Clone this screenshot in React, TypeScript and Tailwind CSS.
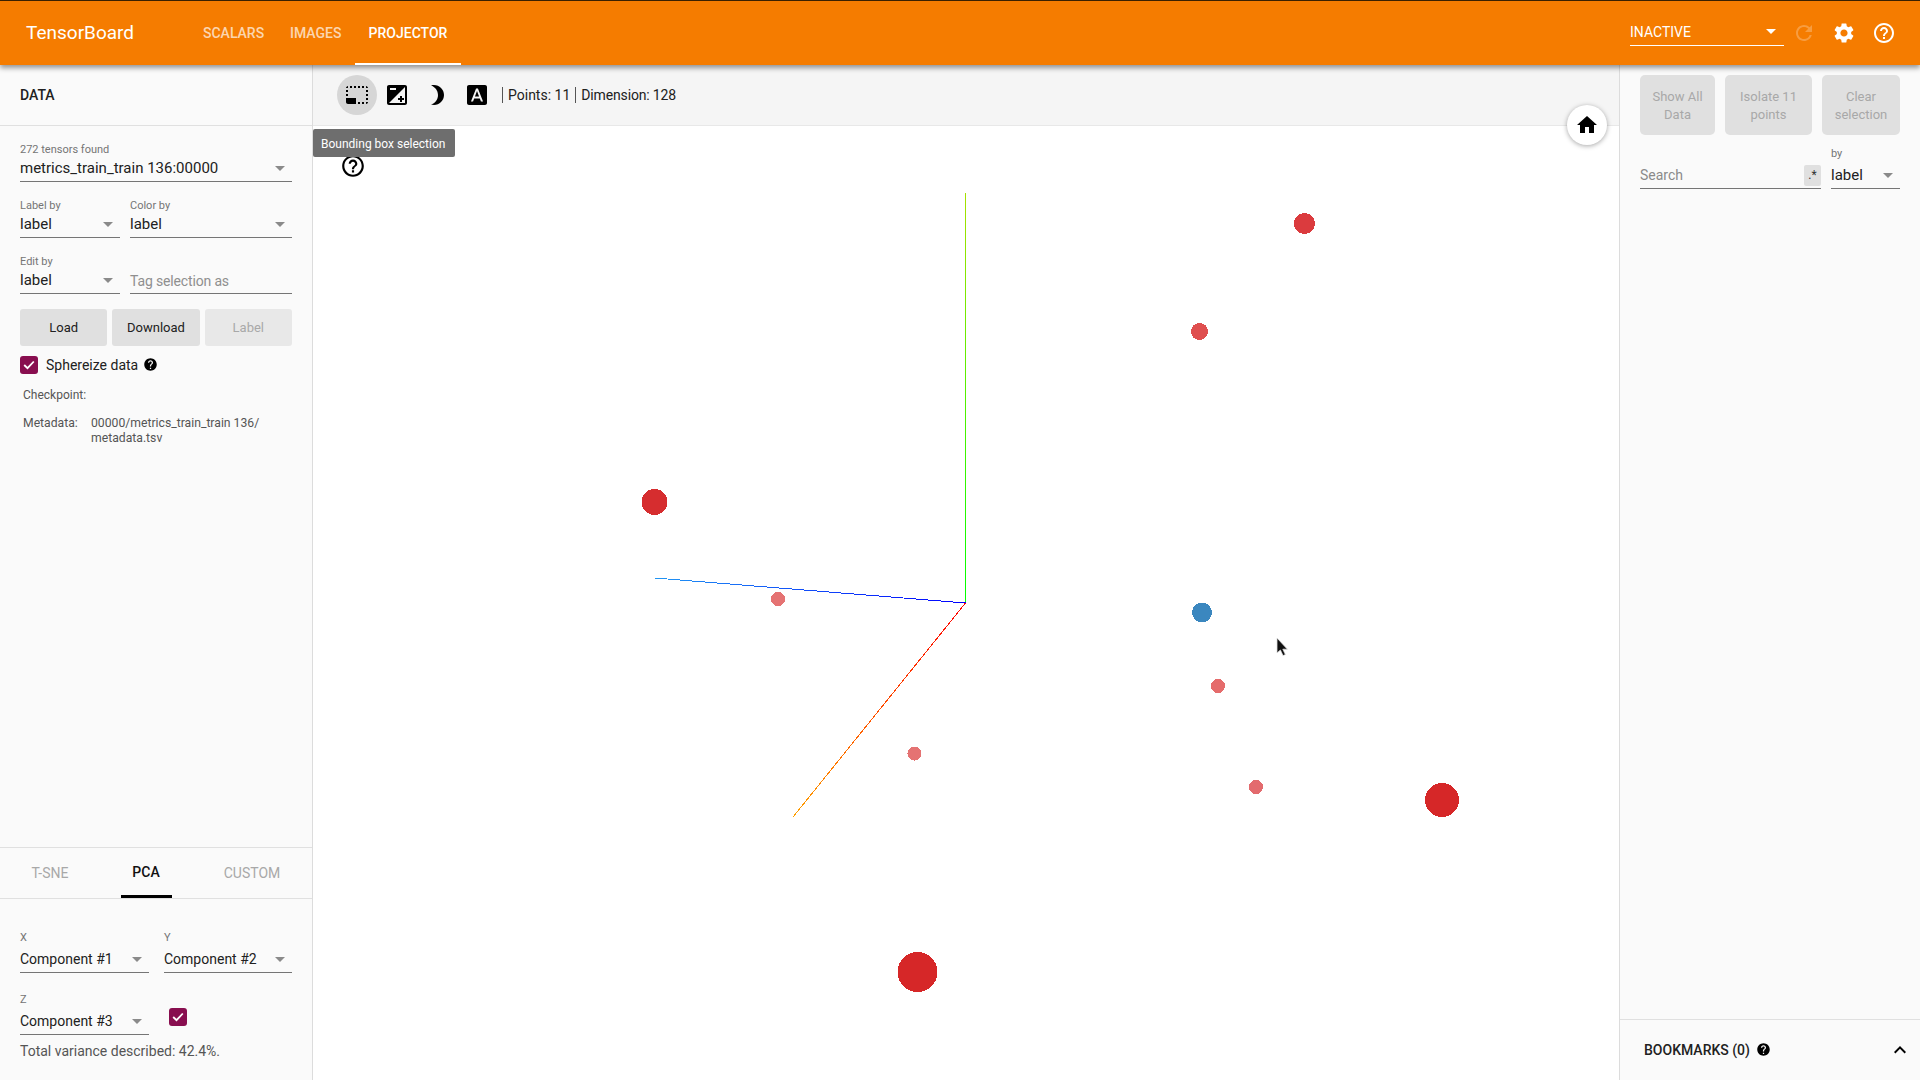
import type { ReactNode } from "react";
import {
  MdBrightness3,
  MdExpandLess,
  MdFontDownload,
  MdHelp,
  MdHelpOutline,
  MdHome,
  MdPhotoSizeSelectSmall,
  MdRefresh,
  MdSettings,
} from "react-icons/md";

const points = [
  { x: 1304.5, y: 223.5, r: 10.5, fill: "#db3b3e" },
  { x: 1199.5, y: 331.5, r: 8.5, fill: "#df4f4f" },
  { x: 654.5, y: 502, r: 13, fill: "#d62d2f" },
  { x: 778, y: 599, r: 7, fill: "#e57373" },
  { x: 1202, y: 612.5, r: 10, fill: "#3b87bf" },
  { x: 1218, y: 686, r: 7, fill: "#e56c6c" },
  { x: 914.5, y: 753.5, r: 7, fill: "#e57373" },
  { x: 1256, y: 787, r: 7, fill: "#e36b6e" },
  { x: 1442, y: 800, r: 17, fill: "#d62728" },
  { x: 917.5, y: 972, r: 20, fill: "#d62728" },
];

function Arrow({ className = "text-[#8a8a8a]" }: { className?: string }) {
  return (
    <svg width="10" height="5" viewBox="0 0 10 5" className={className}>
      <path d="M0 0h10L5 5z" fill="currentColor" />
    </svg>
  );
}

function Select({
  label,
  value,
  tall,
  className = "",
  textClassName = "text-sm",
}: {
  label: string;
  value: string;
  tall?: boolean;
  className?: string;
  textClassName?: string;
}) {
  return (
    <div className={`flex flex-col ${className}`}>
      <div
        className={`h-[13px] pt-px text-[11px] leading-3 text-[#757575] ${tall ? "mb-[2px]" : ""}`}
      >
        {label}
      </div>
      <div
        className={`flex items-center justify-between border-b border-[#757575] pr-[7px] text-[#212121] ${tall ? "h-[27px]" : "h-[26px]"} ${textClassName}`}
      >
        <span>{value}</span>
        <Arrow />
      </div>
    </div>
  );
}

function Check({ className = "" }: { className?: string }) {
  return (
    <div
      className={`flex h-[18px] w-[18px] items-center justify-center rounded-[3px] bg-[#880e4f] ${className}`}
    >
      <svg width="12" height="10" viewBox="0 0 12 10">
        <path d="M1.2 5l3.3 3.2L10.8 1.5" fill="none" stroke="white" strokeWidth="1.8" />
      </svg>
    </div>
  );
}

function ToolIcon({ children, active }: { children: ReactNode; active?: boolean }) {
  return (
    <div
      className={`flex h-10 w-10 items-center justify-center rounded-full ${active ? "bg-[#d6d6d6]" : ""}`}
    >
      {children}
    </div>
  );
}

function Header() {
  return (
    <div className="relative z-30 flex h-[65px] shrink-0 items-stretch border-t border-[#3a2000] bg-[#f57c00] text-white shadow-[0_3px_5px_rgba(0,0,0,0.4)]">
      <div className="flex w-[203px] items-center pl-[26px] text-[19px]">TensorBoard</div>
      <div className="flex text-sm font-medium">
        <div className="flex w-[87px] items-center text-white/70">SCALARS</div>
        <div className="flex w-[65px] items-center text-white/70">IMAGES</div>
        <div className="flex w-[106px] items-center justify-center border-b-2 border-white pt-0.5">
          PROJECTOR
        </div>
      </div>
      <div className="ml-auto flex items-center pr-6">
        <div className="flex h-[26px] w-[154px] items-center justify-between border-b border-white pb-0.5 pr-2 text-sm">
          <span>INACTIVE</span>
          <Arrow className="text-white" />
        </div>
        <MdRefresh size={24} className="ml-2 text-white/25" />
        <MdSettings size={24} className="ml-4" />
        <MdHelpOutline size={24} className="ml-4" />
      </div>
    </div>
  );
}

function LeftPanel() {
  return (
    <div className="flex w-[313px] shrink-0 flex-col border-r border-[#dcdcdc] bg-[#fafafa]">
      <div className="flex h-[61px] items-center border-b border-[#e0e0e0] pl-5 text-sm font-medium text-[#212121]">
        DATA
      </div>
      <div className="flex flex-col px-5 pt-[17px]">
        <Select
          label="272 tensors found"
          value="metrics_train_train 136:00000"
          textClassName="text-[15px]"
        />
        <div className="mt-[17px] flex gap-2.5">
          <Select label="Label by" value="label" className="w-[100px]" textClassName="text-[15px]" />
          <Select label="Color by" value="label" className="flex-1" textClassName="text-[15px]" />
        </div>
        <div className="mt-[17px] flex gap-2.5">
          <Select label="Edit by" value="label" className="w-[100px]" textClassName="text-[15px]" />
          <div className="flex flex-1 flex-col">
            <div className="h-[13px]" />
            <div className="flex h-[26px] items-center border-b border-[#757575] text-sm tracking-[-0.15px] text-[#8f8f8f]">
              Tag selection as
            </div>
          </div>
        </div>
        <div className="mt-[15px] flex h-[37px] gap-[5px] text-[13px]">
          <div className="flex flex-1 items-center justify-center rounded-[3px] bg-[#e0e0e0] text-[#212121]">
            Load
          </div>
          <div className="flex flex-1 items-center justify-center rounded-[3px] bg-[#e0e0e0] text-[#212121]">
            Download
          </div>
          <div className="flex flex-1 items-center justify-center rounded-[3px] bg-[#e8e8e8] text-[#a8a8a8]">
            Label
          </div>
        </div>
        <div className="mt-2.5 flex h-[18px] items-center text-sm text-[#212121]">
          <Check />
          <span className="ml-2">Sphereize data</span>
          <MdHelp size={15} className="mb-0.5 ml-[5px] text-black" />
        </div>
        <div className="mt-[13px] pl-[3px] text-xs leading-4 text-[#555]">Checkpoint:</div>
        <div className="mt-[13px] flex pl-[3px] text-[12.2px] leading-[15px] text-[#555]">
          <span className="w-[68px]">Metadata:</span>
          <span className="w-[190px]">
            00000/metrics_train_train 136/
            <br />
            metadata.tsv
          </span>
        </div>
      </div>
      <div className="mt-auto flex flex-col">
        <div className="flex h-[52px] border-y border-[#e0e0e0] text-sm text-[#a8a8a8]">
          <div className="flex w-[100px] items-center justify-center">T-SNE</div>
          <div className="flex w-[92px] justify-center">
            <div className="flex w-[51px] items-center justify-center border-b-[3px] border-black font-medium text-[#111]">
              PCA
            </div>
          </div>
          <div className="flex w-[120px] items-center justify-center">CUSTOM</div>
        </div>
        <div className="flex flex-col px-5 pb-[19px] pt-8">
          <div className="flex gap-[15px]">
            <Select tall label="X" value="Component #1" className="w-[129px]" />
            <Select tall label="Y" value="Component #2" className="flex-1" />
          </div>
          <div className="mt-5 flex gap-5">
            <Select tall label="Z" value="Component #3" className="w-[129px]" />
            <Check className="mt-[15px]" />
          </div>
          <div className="mt-1.5 text-sm leading-5 text-[#555]">
            Total variance described: 42.4%.
          </div>
        </div>
      </div>
    </div>
  );
}

function Scatter() {
  return (
    <svg
      viewBox="313 126 1306 954"
      className="absolute inset-0 h-full w-full"
    >
      <defs>
        <linearGradient id="yAxis" gradientUnits="userSpaceOnUse" x1="965.5" y1="193" x2="965.5" y2="603">
          <stop offset="0" stopColor="#a6e000" />
          <stop offset="1" stopColor="#00ff00" />
        </linearGradient>
        <linearGradient id="xAxis" gradientUnits="userSpaceOnUse" x1="655" y1="578" x2="965" y2="603">
          <stop offset="0" stopColor="#2196f3" />
          <stop offset="1" stopColor="#0000ff" />
        </linearGradient>
        <linearGradient id="zAxis" gradientUnits="userSpaceOnUse" x1="965" y1="603" x2="793" y2="817">
          <stop offset="0" stopColor="#ff0000" />
          <stop offset="1" stopColor="#ffa000" />
        </linearGradient>
      </defs>
      <path d="M965.5 193V603" stroke="url(#yAxis)" strokeWidth="1" shapeRendering="crispEdges" />
      <path d="M655 578L965.5 603" stroke="url(#xAxis)" strokeWidth="1" shapeRendering="crispEdges" />
      <path d="M965.5 603L793 817" stroke="url(#zAxis)" strokeWidth="1" shapeRendering="crispEdges" />
      {points.map((p, i) => (
        <circle key={i} cx={p.x} cy={p.y} r={p.r} fill={p.fill} shapeRendering="crispEdges" />
      ))}
      {/* mouse pointer */}
      <path
        d="M1277 638v15l3.4-3 2.6 5.6 2.4-1-2.6-5.4h4.6z"
        fill="#111"
        stroke="#ddd"
        strokeWidth="0.8"
      />
    </svg>
  );
}

function CenterPanel() {
  return (
    <div className="relative flex min-w-0 flex-1 flex-col bg-white">
      <div className="flex h-[61px] shrink-0 items-center border-b border-[#e8e8e8] bg-[#f5f5f5] pl-6 text-sm text-[#212121]">
        <ToolIcon active>
          <MdPhotoSizeSelectSmall size={24} className="text-black" />
        </ToolIcon>
        <ToolIcon>
          <svg width="24" height="24" viewBox="0 0 24 24" fill="black">
            <path d="M15 17v2h2v-2h2v-2h-2v-2h-2v2h-2v2h2zm5-15H4c-1.1 0-2 .9-2 2v16c0 1.1.9 2 2 2h16c1.1 0 2-.9 2-2V4c0-1.1-.9-2-2-2zM5 5h6v2H5V5zm15 15H4L20 4v16z" />
          </svg>
        </ToolIcon>
        <ToolIcon>
          <MdBrightness3 size={24} className="text-black" />
        </ToolIcon>
        <ToolIcon>
          <MdFontDownload size={24} className="text-black" />
        </ToolIcon>
        <div className="ml-[5px] h-[16px] border-l border-[#555]" />
        <span className="ml-[5px]">Points: 11</span>
        <div className="ml-[5px] h-[16px] border-l border-[#555]" />
        <span className="ml-[5px] tracking-[-0.15px]">Dimension: 128</span>
      </div>
      <div className="relative flex-1">
        <Scatter />
      </div>
      <div className="absolute left-0 top-[64px] z-20 flex h-7 w-[142px] items-center rounded-[2px] bg-[#6e6e6e] pl-2 pt-0.5 text-xs text-white">
        Bounding box selection
      </div>
      <MdHelpOutline size={26} className="absolute left-[27px] top-[88px] z-10 text-black" />
      <div className="absolute left-[1254px] top-10 z-20 flex h-10 w-10 items-center justify-center rounded-full bg-white shadow-[0_1px_5px_rgba(0,0,0,0.35)]">
        <MdHome size={24} className="text-black" />
      </div>
    </div>
  );
}

function RightPanel() {
  return (
    <div className="flex w-[301px] shrink-0 flex-col border-l border-[#dcdcdc] bg-[#fafafa]">
      <div className="flex flex-col px-5 pt-2.5">
        <div className="flex h-[60px] gap-2.5 text-[13px] leading-[18px] text-[#a8a8a8]">
          <div className="flex w-[75px] items-center justify-center rounded-[5px] bg-[#e0e0e0] pt-0.5 text-center">
            Show All
            <br />
            Data
          </div>
          <div className="flex w-[87px] items-center justify-center rounded-[5px] bg-[#e0e0e0] pt-0.5 text-center">
            Isolate 11
            <br />
            points
          </div>
          <div className="flex flex-1 items-center justify-center rounded-[5px] bg-[#e0e0e0] pt-0.5 text-center">
            Clear
            <br />
            selection
          </div>
        </div>
        <div className="mt-3 flex gap-2.5">
          <div className="flex flex-1 items-end">
            <div className="flex h-[27px] flex-1 items-center justify-between border-b border-[#757575] text-sm text-[#8a8a8a]">
              <span>Search</span>
              <span className="flex h-[21px] w-[17px] items-center justify-center rounded-[2px] bg-[#e0e0e0] text-xs text-[#333]">
                .*
              </span>
            </div>
          </div>
          <Select tall label="by" value="label" className="w-[69px]" textClassName="text-[15px]" />
        </div>
      </div>
      <div className="mt-auto flex h-[61px] items-center border-t border-[#e0e0e0] pl-6 pr-2 text-sm font-medium text-[#212121]">
        <span>BOOKMARKS (0)</span>
        <MdHelp size={15} className="mb-0.5 ml-[6px] text-black" />
        <MdExpandLess size={24} className="ml-auto text-black" />
      </div>
    </div>
  );
}

export default function App() {
  return (
    <div className="flex h-screen w-full flex-col overflow-hidden bg-white font-[Roboto,sans-serif]">
      <Header />
      <div className="flex min-h-0 flex-1">
        <LeftPanel />
        <CenterPanel />
        <RightPanel />
      </div>
    </div>
  );
}
